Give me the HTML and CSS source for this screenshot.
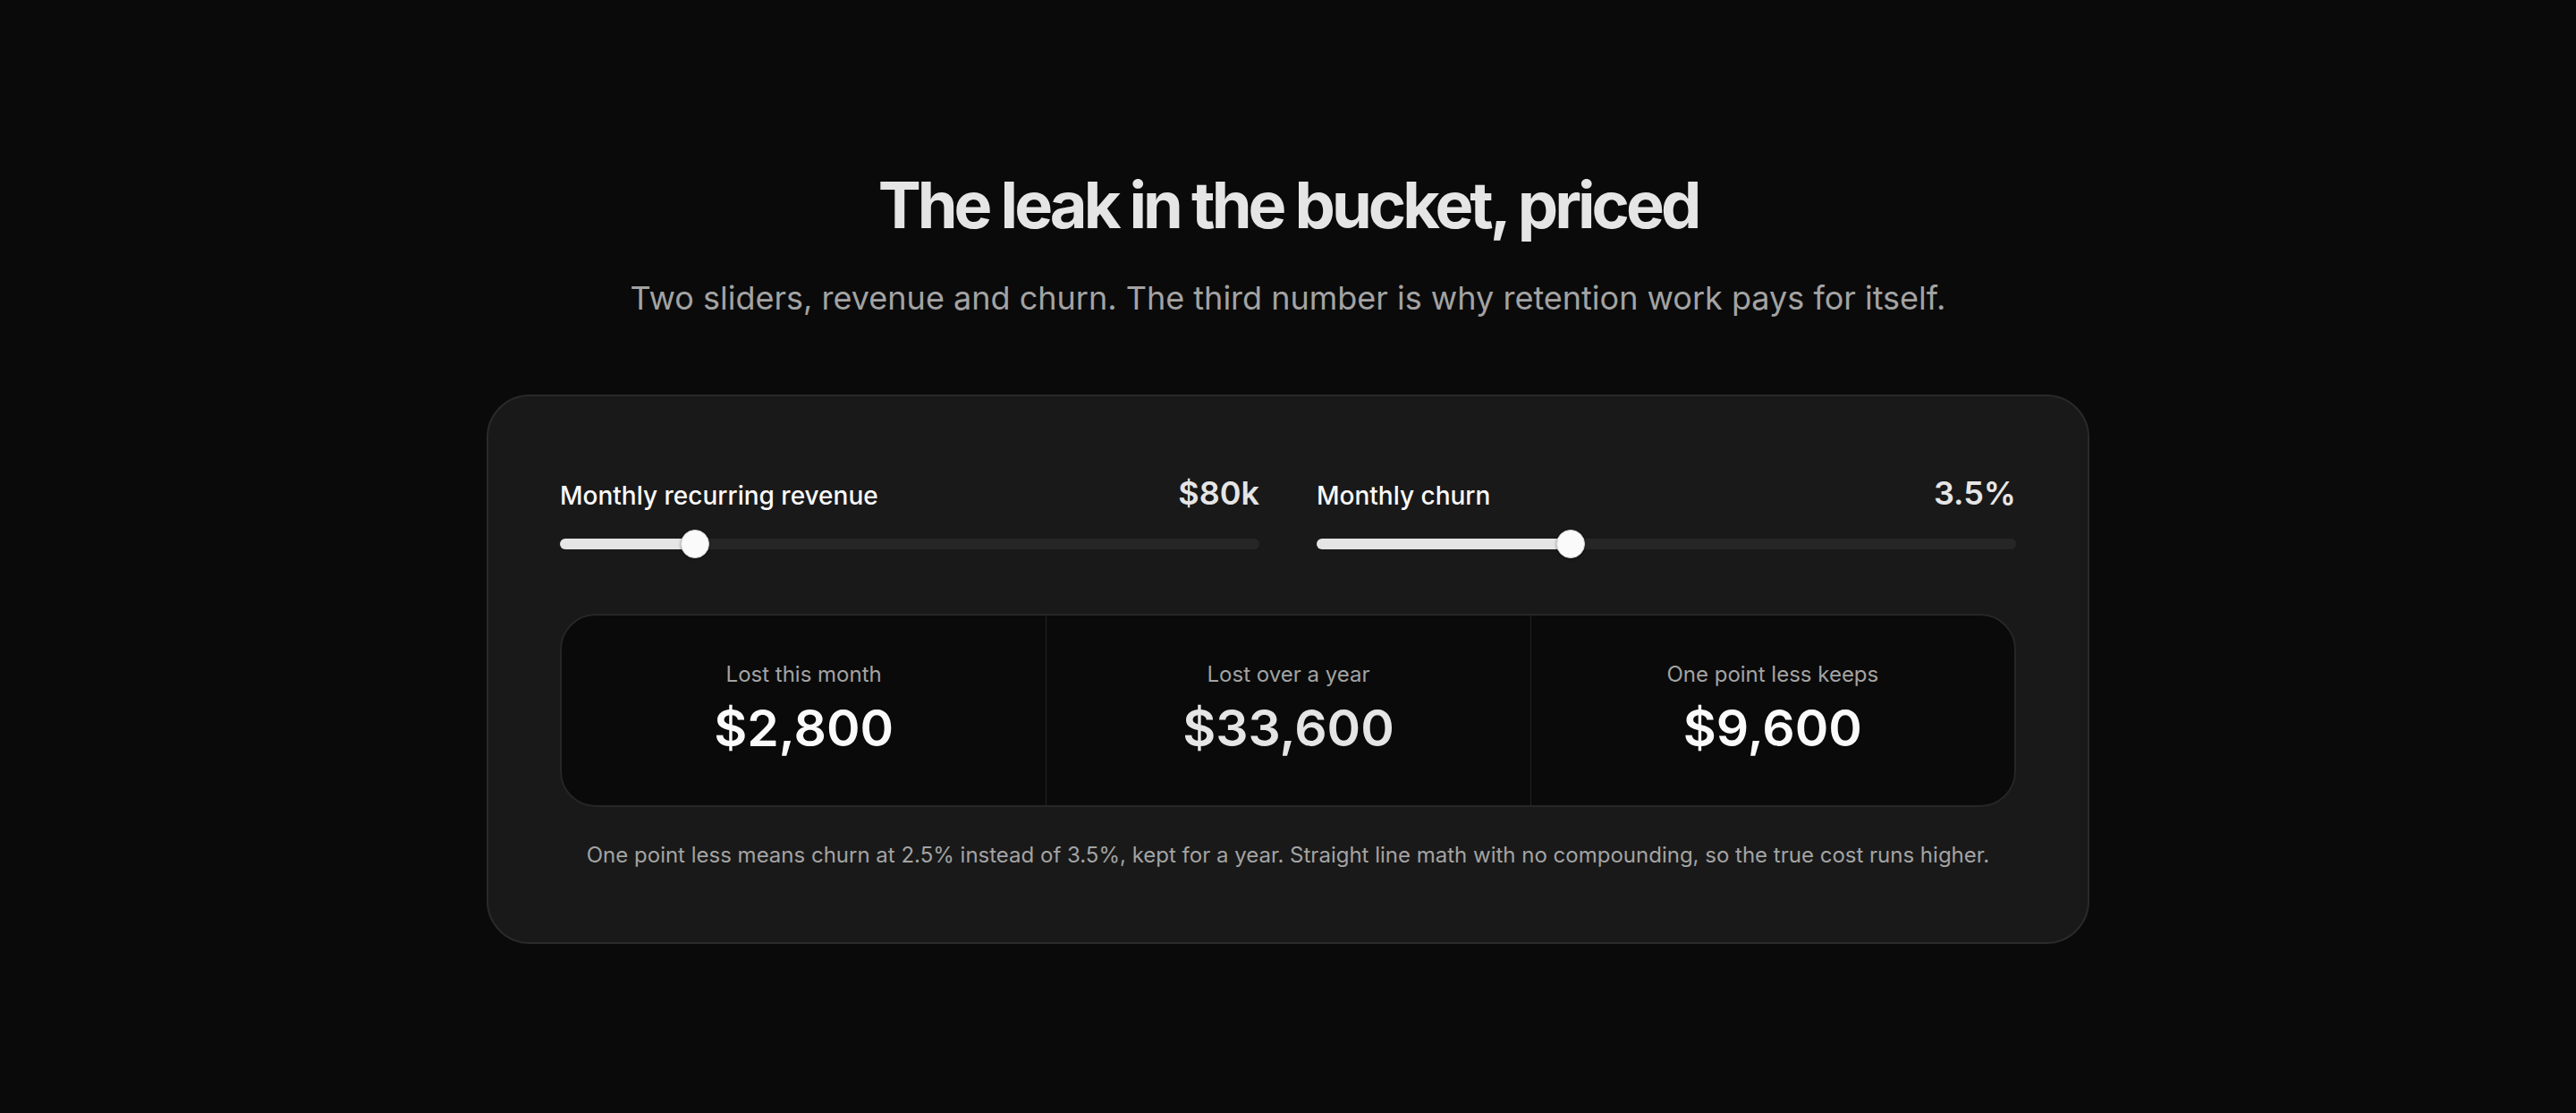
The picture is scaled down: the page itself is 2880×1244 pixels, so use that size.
FILE: index.html
```html
<!DOCTYPE html>
<html lang="en">
<head>
    <meta charset="UTF-8">
    <meta name="viewport" content="width=device-width, initial-scale=1.0">
    <title>Churn Calculator</title>
    <link rel="stylesheet" href="styles.css">
</head>
<body>
    <main class="page">
        <h1 class="title">The leak in the bucket, priced</h1>
        <p class="subtitle">Two sliders, revenue and churn. The third number is why retention work pays for itself.</p>

        <section class="calc-card">
            <div class="sliders">
                <div class="slider-group">
                    <div class="slider-head">
                        <label for="mrr" class="slider-label">Monthly recurring revenue</label>
                        <span class="slider-value" id="mrr-value">$80k</span>
                    </div>
                    <input type="range" id="mrr" class="range" min="10" max="400" step="5" value="80">
                </div>
                <div class="slider-group">
                    <div class="slider-head">
                        <label for="churn" class="slider-label">Monthly churn</label>
                        <span class="slider-value" id="churn-value">3.5%</span>
                    </div>
                    <input type="range" id="churn" class="range" min="1" max="8" step="0.1" value="3.5">
                </div>
            </div>

            <div class="stats">
                <div class="stat">
                    <div class="stat-label">Lost this month</div>
                    <div class="stat-value" id="lost-month">$2,800</div>
                </div>
                <div class="stat">
                    <div class="stat-label">Lost over a year</div>
                    <div class="stat-value dim" id="lost-year">$33,600</div>
                </div>
                <div class="stat">
                    <div class="stat-label">One point less keeps</div>
                    <div class="stat-value" id="kept">$9,600</div>
                </div>
            </div>

            <p class="note" id="note">One point less means churn at 2.5% instead of 3.5%, kept for a year. Straight line math with no compounding, so the true cost runs higher.</p>
        </section>
    </main>

    <script>
        var mrrInput = document.getElementById('mrr');
        var churnInput = document.getElementById('churn');

        function money(n) {
            return '$' + Math.round(n).toLocaleString('en-US');
        }

        // Paint the filled part of the track up to the thumb centre (thumb is 32px wide)
        function paintTrack(input) {
            var min = parseFloat(input.min), max = parseFloat(input.max);
            var p = (parseFloat(input.value) - min) / (max - min);
            var w = input.offsetWidth;
            var pos = 16 + p * (w - 32);
            input.style.setProperty('--fill', (pos / w * 100) + '%');
        }

        function update() {
            var mrr = parseFloat(mrrInput.value) * 1000;
            var churn = parseFloat(churnInput.value);

            document.getElementById('mrr-value').textContent = '$' + mrrInput.value + 'k';
            document.getElementById('churn-value').textContent = churn.toFixed(1) + '%';

            var lostMonth = mrr * churn / 100;
            document.getElementById('lost-month').textContent = money(lostMonth);
            document.getElementById('lost-year').textContent = money(lostMonth * 12);
            document.getElementById('kept').textContent = money(mrr * 0.01 * 12);

            var lower = Math.max(churn - 1, 0);
            document.getElementById('note').textContent = 'One point less means churn at ' + lower.toFixed(1) +
                '% instead of ' + churn.toFixed(1) + '%, kept for a year. Straight line math with no compounding, so the true cost runs higher.';

            paintTrack(mrrInput);
            paintTrack(churnInput);
        }

        mrrInput.addEventListener('input', update);
        churnInput.addEventListener('input', update);
        window.addEventListener('resize', update);
        update();
    </script>
</body>
</html>
```

FILE: styles.css
```css
* {
    box-sizing: border-box;
}
body {
    font-family: Inter, "Noto Sans", Arial, sans-serif;
    background-color: #0a0a0a;
    color: #fafafa;
    margin: 0;
    padding: 0;
}
.page {
    min-height: 100vh;
    display: flex;
    flex-direction: column;
    align-items: center;
    justify-content: center;
    padding: 40px 20px;
}
.title {
    margin: 0;
    font-size: 72px;
    line-height: 1.1;
    font-weight: 700;
    letter-spacing: -0.055em;
    color: #e5e5e5;
}
.subtitle {
    margin: 37px 0 0;
    font-size: 36px;
    line-height: 1.5;
    color: #a3a3a3;
}
.calc-card {
    width: 1792px;
    max-width: 100%;
    margin-top: 81px;
    background-color: #191919;
    border: 2px solid #2a2a2a;
    border-radius: 48px;
    padding: 90px 80px 83px;
}
.sliders {
    display: grid;
    grid-template-columns: 1fr 1fr;
    gap: 64px;
}
.slider-head {
    display: flex;
    justify-content: space-between;
    align-items: baseline;
    line-height: 36px;
}
.slider-label {
    font-size: 28px;
    font-weight: 500;
    color: #fafafa;
}
.slider-value {
    font-size: 36px;
    font-weight: 600;
    color: #e5e5e5;
}

/* range input: grey track, light fill up to the thumb */
.range {
    -webkit-appearance: none;
    appearance: none;
    display: block;
    width: 100%;
    height: 32px;
    margin: 20px 0 0;
    background: transparent;
    cursor: pointer;
    --fill: 20%;
}
.range:focus {
    outline: none;
}
.range::-webkit-slider-runnable-track {
    height: 12px;
    border-radius: 6px;
    background: linear-gradient(to right, #e5e5e5 0, #e5e5e5 var(--fill), #262626 var(--fill), #262626 100%);
}
.range::-webkit-slider-thumb {
    -webkit-appearance: none;
    width: 32px;
    height: 32px;
    margin-top: -10px;
    border-radius: 50%;
    background: #fafafa;
    border: 1px solid #d4d4d4;
    box-shadow: 0 1px 3px rgba(0, 0, 0, 0.4);
}

.stats {
    display: grid;
    grid-template-columns: repeat(3, 1fr);
    margin-top: 62px;
    background-color: #0a0a0a;
    border: 2px solid #262626;
    border-radius: 40px;
    overflow: hidden;
}
.stat {
    text-align: center;
    padding: 51px 20px 52px;
    border-left: 1px solid #222;
}
.stat:first-child {
    border-left: none;
}
.stat-label {
    font-size: 24px;
    line-height: 29px;
    color: #a3a3a3;
}
.stat-value {
    margin-top: 12px;
    font-size: 57px;
    line-height: 68px;
    font-weight: 600;
    color: #fafafa;
}
.stat-value.dim {
    color: #e5e5e5;
}
.note {
    margin: 39px 0 0;
    text-align: center;
    font-size: 24px;
    line-height: 29px;
    color: #a3a3a3;
}
```
